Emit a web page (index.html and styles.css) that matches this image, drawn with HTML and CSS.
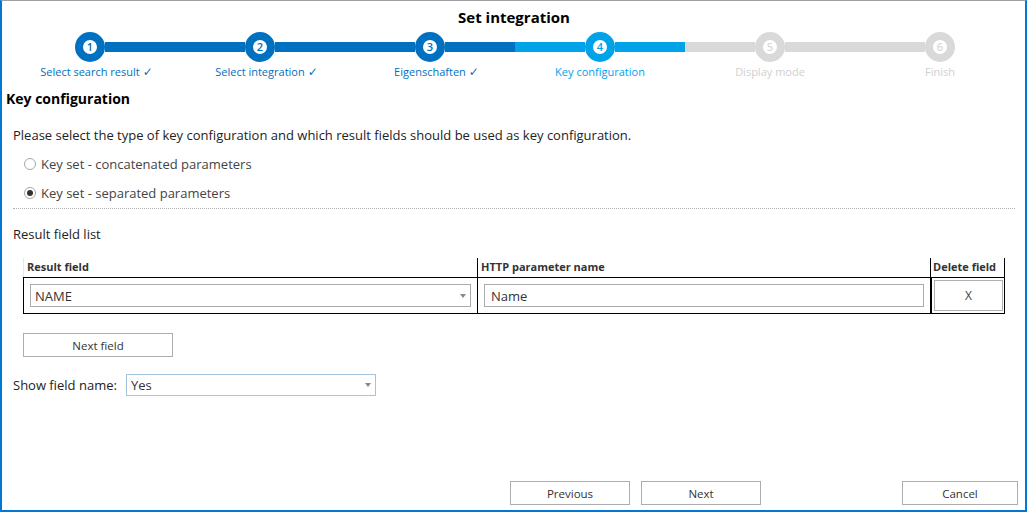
FILE: index.html
```html
<!DOCTYPE html>
<html>
<head>
<meta charset="utf-8">
<link rel="stylesheet" href="styles.css">
</head>
<body>
<div class="frame">
  <div class="title">Set integration</div>
  <div class="steps">
    <div class="step done">
      <div class="track"><span class="seg none"></span><span class="ring"><span class="num">1</span></span><span class="seg dark"></span></div>
      <div class="label">Select search result<span class="check">✓</span></div>
    </div>
    <div class="step done">
      <div class="track"><span class="seg dark"></span><span class="ring"><span class="num">2</span></span><span class="seg dark"></span></div>
      <div class="label">Select integration<span class="check">✓</span></div>
    </div>
    <div class="step done">
      <div class="track"><span class="seg dark"></span><span class="ring"><span class="num">3</span></span><span class="seg dark"></span></div>
      <div class="label">Eigenschaften<span class="check">✓</span></div>
    </div>
    <div class="step current">
      <div class="track"><span class="seg light"></span><span class="ring"><span class="num">4</span></span><span class="seg light"></span></div>
      <div class="label">Key configuration</div>
    </div>
    <div class="step todo">
      <div class="track"><span class="seg grey"></span><span class="ring"><span class="num">5</span></span><span class="seg grey"></span></div>
      <div class="label">Display mode</div>
    </div>
    <div class="step todo">
      <div class="track"><span class="seg grey"></span><span class="ring"><span class="num">6</span></span><span class="seg none"></span></div>
      <div class="label">Finish</div>
    </div>
  </div>

  <div class="section-title">Key configuration</div>

  <div class="content">
    <p class="intro">Please select the type of key configuration and which result fields should be used as key configuration.</p>
    <div class="radio-row"><span class="radio"></span><span>Key set - concatenated parameters</span></div>
    <div class="radio-row"><span class="radio checked"></span><span>Key set - separated parameters</span></div>
    <div class="dotted"></div>
    <div class="list-title">Result field list</div>

    <div class="grid">
      <div class="th th1">Result field</div>
      <div class="th th2">HTTP parameter name</div>
      <div class="th th3">Delete field</div>
      <div class="td td1"><div class="select"><span>NAME</span><span class="caret"></span></div></div>
      <div class="td td2"><div class="input">Name</div></div>
      <div class="td td3"><div class="xbtn">X</div></div>
    </div>

    <div class="btn next-field">Next field</div>

    <div class="show-row">
      <span>Show field name:</span>
      <div class="select blue"><span>Yes</span><span class="caret"></span></div>
    </div>
  </div>

  <div class="footer">
    <div class="btn fbtn">Previous</div>
    <div class="btn fbtn">Next</div>
    <div class="spacer"></div>
    <div class="btn fbtn cancel">Cancel</div>
  </div>
</div>
</body>
</html>
```

FILE: styles.css
```css
* { box-sizing: border-box; }
html, body { margin: 0; padding: 0; background: #fff; }
body { font-family: "Open Sans", "Noto Sans", sans-serif; color: #222; }

.frame {
  width: 1027px;
  height: 512px;
  border-top: 1px solid #a0a0a0;
  border-left: 2px solid #0078d7;
  border-right: 2px solid #0078d7;
  border-bottom: 2px solid #0078d7;
  display: flex;
  flex-direction: column;
}

.title {
  text-align: center;
  font-weight: 700;
  font-size: 15px;
  line-height: 20px;
  margin-top: 6px;
  color: #000;
  padding-left: 1px;
}

.steps {
  display: flex;
  padding-left: 3px;
  margin-top: 5px;
}
.step {
  width: 170px;
  display: flex;
  flex-direction: column;
  align-items: center;
}
.track {
  width: 100%;
  display: flex;
  align-items: center;
  height: 30px;
}
.seg { flex: 1; height: 10px; }
.seg.none { background: transparent; }
.seg.dark { background: #0070c0; }
.seg.light { background: #00a2e8; }
.seg.grey { background: #d9d9d9; }
.ring {
  width: 30px;
  height: 30px;
  border-radius: 50%;
  border: 8px solid #0070c0;
  background: #fff;
  display: flex;
  align-items: center;
  justify-content: center;
}
.num { font-size: 11px; line-height: 12px; color: #0070c0; font-weight: 600; }
.current .ring { border-color: #00a2e8; }
.current .num { color: #00a2e8; }
.todo .ring { border-color: #d9d9d9; }
.todo .num { color: #d9d9d9; }
.label {
  font-size: 11px;
  line-height: 16px;
  margin-top: 2px;
  color: #0070c0;
  white-space: nowrap;
}
.done .label { padding-left: 13px; }
.check { margin-left: 3px; font-family: "DejaVu Sans", sans-serif; font-size: 12px; font-weight: 700; }
.current .label { color: #00a2e8; }
.todo .label { color: #d0d0d0; }

.section-title {
  font-weight: 700;
  font-size: 14px;
  line-height: 20px;
  margin: 9px 0 0 4px;
  color: #000;
}

.content { padding-left: 11px; padding-right: 10px; font-size: 13px; }
.intro { margin: 17px 0 0 0; line-height: 18px; color: #222; }
.radio-row {
  display: flex;
  align-items: center;
  height: 18px;
  margin-top: 11px;
  padding-left: 11px;
  color: #444;
}
.radio-row + .radio-row { margin-top: 11px; }
.radio {
  width: 12px;
  height: 12px;
  border-radius: 50%;
  border: 1px solid #a8a8a8;
  margin-right: 5px;
  display: flex;
  align-items: center;
  justify-content: center;
  background: #fff;
}
.radio.checked::after {
  content: "";
  width: 6px;
  height: 6px;
  border-radius: 50%;
  background: #333;
}
.dotted {
  margin-top: 6px;
  border-top: 1px dotted #b0b0b0;
  height: 0;
}
.list-title { margin-top: 16px; line-height: 18px; color: #222; }

.grid {
  margin-top: 15px;
  margin-left: 10px;
  width: 982px;
  display: grid;
  grid-template-columns: 454px 453px 75px;
}
.th {
  font-size: 11px;
  font-weight: 700;
  line-height: 18px;
  height: 19px;
  color: #333;
  padding-left: 3px;
  border-left: 1px solid #000;
}
.th1 { border-left: 1px solid #e8e8e8; }
.th3 { border-right: 1px solid #000; padding-left: 2px; }
.td {
  border-top: 1px solid #000;
  border-bottom: 1px solid #000;
  border-left: 1px solid #000;
  height: 37px;
  display: flex;
  align-items: center;
  padding-left: 6px;
}
.td2 { padding-left: 6px; }
.td3 { border-left: 2px solid #000; border-right: 1px solid #000; padding: 2px 1px 2px 2px; }
.select {
  width: 441px;
  height: 23px;
  border: 1px solid #ababab;
  display: flex;
  align-items: center;
  justify-content: space-between;
  padding: 0 4px 0 4px;
  font-size: 13px;
  color: #333;
}
.caret {
  width: 0; height: 0;
  border-left: 3px solid transparent;
  border-right: 3px solid transparent;
  border-top: 4px solid #888;
}
.input {
  width: 440px;
  height: 23px;
  border: 1px solid #ababab;
  display: flex;
  align-items: center;
  padding-left: 6px;
  font-size: 13px;
  color: #333;
}
.xbtn {
  width: 70px;
  height: 31px;
  border: 1px solid #b0b0b0;
  display: flex;
  align-items: center;
  justify-content: center;
  font-size: 12px;
  color: #444;
}

.btn {
  height: 24px;
  border: 1px solid #adadad;
  background: #fff;
  display: flex;
  align-items: center;
  justify-content: center;
  font-size: 11.5px;
  color: #333;
}
.next-field { width: 150px; margin: 19px 0 0 10px; }

.show-row {
  display: flex;
  align-items: center;
  margin-top: 17px;
  color: #222;
}
.show-row > span { width: 113px; }
.select.blue { width: 250px; height: 22px; border-color: #a3c4de; }

.footer {
  margin-top: auto;
  display: flex;
  padding: 0 7px 5px 508px;
}
.fbtn { width: 120px; height: 24px; }
.fbtn + .fbtn { margin-left: 11px; }
.spacer { flex: 1; }
.cancel { width: 116px; margin-left: 0 !important; }
```
